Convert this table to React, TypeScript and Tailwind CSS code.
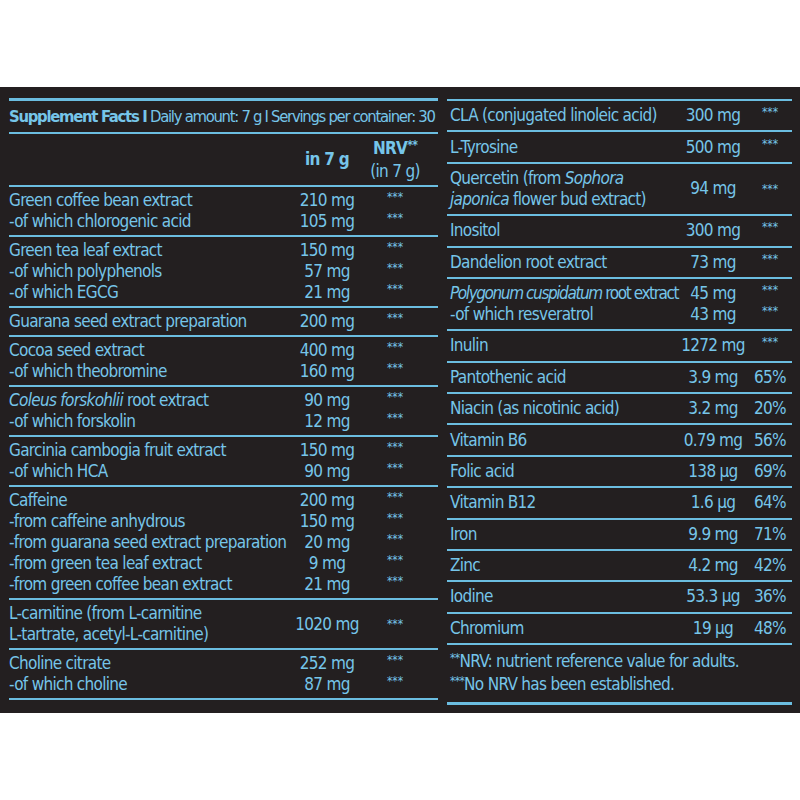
import type { ReactNode } from "react";

type Line = [ReactNode, string, string];
type Group = { lines: Line[]; merged?: boolean };

const left: Group[] = [
  {
    lines: [
      ["Green coffee bean extract", "210 mg", "***"],
      ["-of which chlorogenic acid", "105 mg", "***"],
    ],
  },
  {
    lines: [
      ["Green tea leaf extract", "150 mg", "***"],
      ["-of which polyphenols", "57 mg", "***"],
      ["-of which EGCG", "21 mg", "***"],
    ],
  },
  { lines: [["Guarana seed extract preparation", "200 mg", "***"]] },
  {
    lines: [
      ["Cocoa seed extract", "400 mg", "***"],
      ["-of which theobromine", "160 mg", "***"],
    ],
  },
  {
    lines: [
      [
        <>
          <i>Coleus forskohlii</i> root extract
        </>,
        "90 mg",
        "***",
      ],
      ["-of which forskolin", "12 mg", "***"],
    ],
  },
  {
    lines: [
      ["Garcinia cambogia fruit extract", "150 mg", "***"],
      ["-of which HCA", "90 mg", "***"],
    ],
  },
  {
    lines: [
      ["Caffeine", "200 mg", "***"],
      ["-from caffeine anhydrous", "150 mg", "***"],
      ["-from guarana seed extract preparation", "20 mg", "***"],
      ["-from green tea leaf extract", "9 mg", "***"],
      ["-from green coffee bean extract", "21 mg", "***"],
    ],
  },
  {
    merged: true,
    lines: [
      [
        <>
          L-carnitine (from L-carnitine
          <br />
          L-tartrate, acetyl-L-carnitine)
        </>,
        "1020 mg",
        "***",
      ],
    ],
  },
  {
    lines: [
      ["Choline citrate", "252 mg", "***"],
      ["-of which choline", "87 mg", "***"],
    ],
  },
];

const right: Group[] = [
  { lines: [["CLA (conjugated linoleic acid)", "300 mg", "***"]] },
  { lines: [["L-Tyrosine", "500 mg", "***"]] },
  {
    merged: true,
    lines: [
      [
        <>
          Quercetin (from <i>Sophora</i>
          <br />
          <i>japonica</i> flower bud extract)
        </>,
        "94 mg",
        "***",
      ],
    ],
  },
  { lines: [["Inositol", "300 mg", "***"]] },
  { lines: [["Dandelion root extract", "73 mg", "***"]] },
  {
    lines: [
      [
        <span className="tracking-[-1.4px]">
          <i>Polygonum cuspidatum</i> root extract
        </span>,
        "45 mg",
        "***",
      ],
      ["-of which resveratrol", "43 mg", "***"],
    ],
  },
  { lines: [["Inulin", "1272 mg", "***"]] },
  { lines: [["Pantothenic acid", "3.9 mg", "65%"]] },
  { lines: [["Niacin (as nicotinic acid)", "3.2 mg", "20%"]] },
  { lines: [["Vitamin B6", "0.79 mg", "56%"]] },
  { lines: [["Folic acid", "138 µg", "69%"]] },
  { lines: [["Vitamin B12", "1.6 µg", "64%"]] },
  { lines: [["Iron", "9.9 mg", "71%"]] },
  { lines: [["Zinc", "4.2 mg", "42%"]] },
  { lines: [["Iodine", "53.3 µg", "36%"]] },
  { lines: [["Chromium", "19 µg", "48%"]] },
];

function Nrv({ v }: { v: string }) {
  if (v === "***")
    return (
      <span className="self-start text-center text-[12px] leading-[14px] tracking-normal">
        ***
      </span>
    );
  return <span className="text-center">{v}</span>;
}

function GroupRows({ g, cols, pad }: { g: Group; cols: string; pad: string }) {
  return (
    <div className={`border-b-2 border-[#6bbde0] ${pad}`}>
      {g.lines.map(([name, amt, nrv], i) => (
        <div key={i} className={`grid items-center ${cols}`}>
          <span className="whitespace-nowrap">{name}</span>
          <span className="whitespace-nowrap text-center">{amt}</span>
          {g.merged ? (
            <span className="text-center text-[12px] leading-[14px] tracking-normal">
              ***
            </span>
          ) : (
            <Nrv v={nrv} />
          )}
        </div>
      ))}
    </div>
  );
}

export default function App() {
  return (
    <div
      className="min-h-[800px] bg-white pt-[87px] text-[#76c5e9] [font-stretch:condensed]"
      style={{
        fontFamily: "'Noto Sans Condensed', 'DejaVu Sans Condensed', sans-serif",
      }}
    >
      <div className="flex h-[626px] gap-[9px] overflow-hidden bg-[#231f20] pl-[9px] pr-[8px] pt-[11px] text-[17px] leading-[21px] tracking-[-0.7px]">
        {/* left column */}
        <div className="w-[429px] shrink-0 border-t-[3px] border-[#6bbde0]">
          <div className="flex h-[33px] items-center whitespace-nowrap border-b-2 border-[#6bbde0] text-[16.5px] tracking-[-1.28px]">
            <b>Supplement Facts I</b>&nbsp;Daily amount: 7 g I Servings per
            container: 30
          </div>
          <div className="grid h-[53px] grid-cols-[minmax(0,1fr)_70px_66px] items-center border-b-2 border-[#6bbde0] pr-[10px]">
            <span />
            <b className="text-center">in 7 g</b>
            <div className="flex flex-col items-center">
              <b>
                NRV<span className="relative -top-[5px] text-[12px]">**</span>
              </b>
              <span>(in 7 g)</span>
            </div>
          </div>
          {left.map((g, i) => (
            <GroupRows
              key={i}
              g={g}
              cols="grid-cols-[minmax(0,1fr)_70px_66px] pr-[10px]"
              pad="py-[3px]"
            />
          ))}
        </div>

        {/* right column */}
        <div className="mt-[1px] w-[345px] shrink-0 border-t-2 border-[#6bbde0]">
          {right.map((g, i) => (
            <GroupRows
              key={i}
              g={g}
              cols="grid-cols-[minmax(0,1fr)_70px_44px] pl-[3px]"
              pad="py-[4.2px]"
            />
          ))}
          <div className="whitespace-nowrap border-b-[3px] border-[#6bbde0] pb-[5px] pl-[3px] pt-[6px]">
            <div>
              <span className="relative -top-[5px] text-[12px]">**</span>NRV:
              nutrient reference value for adults.
            </div>
            <div>
              <span className="relative -top-[5px] text-[12px]">***</span>No
              NRV has been established.
            </div>
          </div>
        </div>
      </div>
    </div>
  );
}
